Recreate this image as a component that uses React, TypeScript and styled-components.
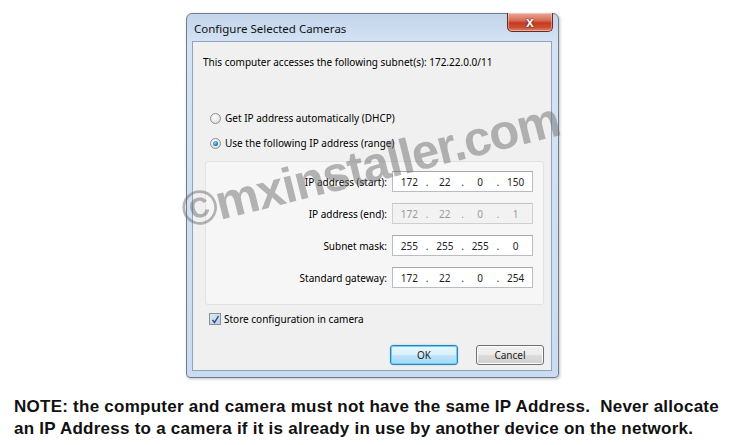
import styled, { createGlobalStyle } from "styled-components";

const GlobalStyle = createGlobalStyle`
  html, body {
    margin: 0;
    padding: 0;
    background: #ffffff;
  }
  body {
    width: 750px;
    height: 445px;
    overflow: hidden;
    font-family: "Liberation Sans", Arial, sans-serif;
  }
`;

const UI_FONT = `"Noto Sans", "Open Sans", "DejaVu Sans", sans-serif`;

const Page = styled.div`
  display: flex;
  flex-direction: column;
  width: 750px;
  height: 445px;
`;

const Shot = styled.div`
  padding: 13px 0 0 186px;
`;

const Window = styled.div`
  position: relative;
  width: 373px;
  height: 365px;
  box-sizing: border-box;
  border: 1px solid #707c8a;
  border-radius: 6px 6px 4px 4px;
  background: linear-gradient(180deg, #c3d5eb 0%, #d5e3f4 30px, #cadcf1 100%);
  padding: 0 6px 6px 5px;
  display: flex;
  flex-direction: column;
  box-shadow: 1px 1px 3px rgba(0, 0, 0, 0.25);
`;

const TitleBar = styled.div`
  height: 27px;
  display: flex;
  align-items: flex-start;
  justify-content: space-between;
`;

const Title = styled.div`
  font-family: ${UI_FONT};
  font-size: 11.5px;
  color: #111111;
  margin: 7px 0 0 2px;
`;

const CloseButton = styled.div`
  width: 46px;
  height: 19px;
  box-sizing: border-box;
  margin: -1px -1px 0 0;
  border: 1px solid #6b2a20;
  border-top: none;
  border-radius: 0 0 5px 5px;
  background: linear-gradient(180deg, #e9a797 0%, #d9705a 40%, #c53a23 55%, #cc4d33 80%, #dd8b74 100%);
  box-shadow: inset 0 0 0 1px rgba(255, 255, 255, 0.35);
  display: flex;
  align-items: center;
  justify-content: center;
  font-family: "Liberation Sans", Arial, sans-serif;
  font-weight: bold;
  font-size: 14px;
  color: #ffffff;
  text-shadow: 0 0 2px #5a1a10, 0 0 1px #5a1a10;
`;

const Client = styled.div`
  width: 360px;
  height: 330px;
  box-sizing: border-box;
  background: #f0f0f0;
  border: 1px solid #8fa3bb;
  display: flex;
  flex-direction: column;
  font-family: ${UI_FONT};
  font-size: 10px;
  color: #000000;
`;

const SubnetText = styled.div`
  line-height: 14px;
  margin: 13px 0 0 10px;
`;

const RadioList = styled.div`
  display: flex;
  flex-direction: column;
  gap: 11px;
  margin: 42px 0 0 17px;
`;

const OptionRow = styled.div`
  display: flex;
  align-items: center;
  gap: 4px;
  height: 14px;
  line-height: 14px;
`;

const Radio = styled.span<{ $checked?: boolean }>`
  width: 11px;
  height: 11px;
  box-sizing: border-box;
  border-radius: 50%;
  border: 1px solid #8c8f94;
  background: radial-gradient(circle at 40% 35%, #ffffff 0%, #e6e6e6 60%, #cfcfcf 100%);
  display: flex;
  align-items: center;
  justify-content: center;

  &::after {
    content: "";
    display: ${(p) => (p.$checked ? "block" : "none")};
    width: 5px;
    height: 5px;
    border-radius: 50%;
    background: radial-gradient(circle at 40% 35%, #8fd3f5 0%, #1b7fbd 60%, #0d4f86 100%);
  }
`;

const Panel = styled.div`
  margin: 11px 0 0 12px;
  width: 339px;
  height: 144px;
  box-sizing: border-box;
  background: #f6f6f6;
  border: 1px solid #e2e2e2;
  border-radius: 3px;
  padding: 9px 10px 0 0;
  display: grid;
  grid-template-columns: 1fr 141px;
  grid-auto-rows: 21px;
  column-gap: 5px;
  row-gap: 11px;
  align-items: center;
`;

const FieldLabel = styled.div`
  text-align: right;
`;

const IpBox = styled.div<{ $disabled?: boolean }>`
  height: 21px;
  box-sizing: border-box;
  border: 1px solid ${(p) => (p.$disabled ? "#cfcfcf" : "#b9bcc2")};
  border-top-color: ${(p) => (p.$disabled ? "#c4c4c4" : "#a3a6ad")};
  background: ${(p) => (p.$disabled ? "#f2f2f2" : "#ffffff")};
  color: ${(p) => (p.$disabled ? "#9a9a9a" : "#1e1e1e")};
  display: flex;
  align-items: center;
  padding: 0 3px;
`;

const Octet = styled.span`
  width: 28px;
  text-align: center;
`;

const Dot = styled.span`
  width: 9px;
  text-align: center;
`;

const CheckRow = styled(OptionRow)`
  margin: 7px 0 0 16px;
  gap: 3px;
`;

const Checkbox = styled.span`
  width: 12px;
  height: 12px;
  box-sizing: border-box;
  border: 1px solid #8e8f8f;
  background: linear-gradient(135deg, #dce9f6 0%, #b9cfe6 100%);
  display: flex;
  align-items: center;
  justify-content: center;
`;

const ButtonRow = styled.div`
  display: flex;
  justify-content: flex-end;
  gap: 18px;
  margin: 19px 7px 0 0;
`;

const Button = styled.div<{ $default?: boolean }>`
  width: 68px;
  height: 20px;
  box-sizing: border-box;
  border-radius: 3px;
  border: 1px solid ${(p) => (p.$default ? "#3c7fb1" : "#707070")};
  background: ${(p) =>
    p.$default
      ? "linear-gradient(180deg, #eaf6fd 0%, #d9f0fc 50%, #bee6fd 50%, #a7d9f5 100%)"
      : "linear-gradient(180deg, #f2f2f2 0%, #ebebeb 50%, #dddddd 50%, #cfcfcf 100%)"};
  box-shadow: ${(p) =>
    p.$default ? "inset 0 0 0 1px #61d3f9, 0 0 2px #8fcbee" : "inset 0 0 0 1px #fcfcfc"};
  display: flex;
  align-items: center;
  justify-content: center;
  color: #1e1e1e;
`;

const Watermark = styled.div`
  position: absolute;
  left: 183px;
  top: 151px;
  transform: translate(-50%, -50%) rotate(-14deg);
  white-space: nowrap;
  font-family: "Liberation Sans", Arial, sans-serif;
  font-weight: bold;
  font-size: 49px;
  letter-spacing: -1.2px;
  color: rgba(110, 110, 110, 0.5);
  pointer-events: none;
`;

const Note = styled.div`
  margin: 18px 0 0 14px;
  font-family: "Liberation Sans", Arial, sans-serif;
  font-weight: bold;
  font-size: 17px;
  letter-spacing: 0.25px;
  line-height: 22px;
  color: #111111;
  white-space: pre;
`;

type IpProps = { value: string[]; disabled?: boolean };

function IpField({ value, disabled }: IpProps) {
  return (
    <IpBox $disabled={disabled}>
      {value.map((v, i) => (
        <span key={i} style={{ display: "contents" }}>
          {i > 0 && <Dot>.</Dot>}
          <Octet>{v}</Octet>
        </span>
      ))}
    </IpBox>
  );
}

const fields: { label: string; value: string[]; disabled?: boolean }[] = [
  { label: "IP address (start):", value: ["172", "22", "0", "150"] },
  { label: "IP address (end):", value: ["172", "22", "0", "1"], disabled: true },
  { label: "Subnet mask:", value: ["255", "255", "255", "0"] },
  { label: "Standard gateway:", value: ["172", "22", "0", "254"] },
];

export default function App() {
  return (
    <Page>
      <GlobalStyle />
      <Shot>
        <Window>
          <TitleBar>
            <Title>Configure Selected Cameras</Title>
            <CloseButton>x</CloseButton>
          </TitleBar>
          <Client>
            <SubnetText>This computer accesses the following subnet(s): 172.22.0.0/11</SubnetText>
            <RadioList>
              <OptionRow>
                <Radio />
                Get IP address automatically (DHCP)
              </OptionRow>
              <OptionRow>
                <Radio $checked />
                Use the following IP address (range)
              </OptionRow>
            </RadioList>
            <Panel>
              {fields.map((f) => [
                <FieldLabel key={f.label}>{f.label}</FieldLabel>,
                <IpField key={f.label + "-v"} value={f.value} disabled={f.disabled} />,
              ])}
            </Panel>
            <CheckRow>
              <Checkbox>
                <svg width="9" height="9" viewBox="0 0 9 9">
                  <path d="M1.5 5 L3.5 7.5 L7.5 1" fill="none" stroke="#2b4d7e" strokeWidth="1.4" />
                </svg>
              </Checkbox>
              Store configuration in camera
            </CheckRow>
            <ButtonRow>
              <Button $default>OK</Button>
              <Button>Cancel</Button>
            </ButtonRow>
          </Client>
          <Watermark>©mxinstaller.com</Watermark>
        </Window>
      </Shot>
      <Note>
        {"NOTE: the computer and camera must not have the same IP Address.  Never allocate\nan IP Address to a camera if it is already in use by another device on the network."}
      </Note>
    </Page>
  );
}
